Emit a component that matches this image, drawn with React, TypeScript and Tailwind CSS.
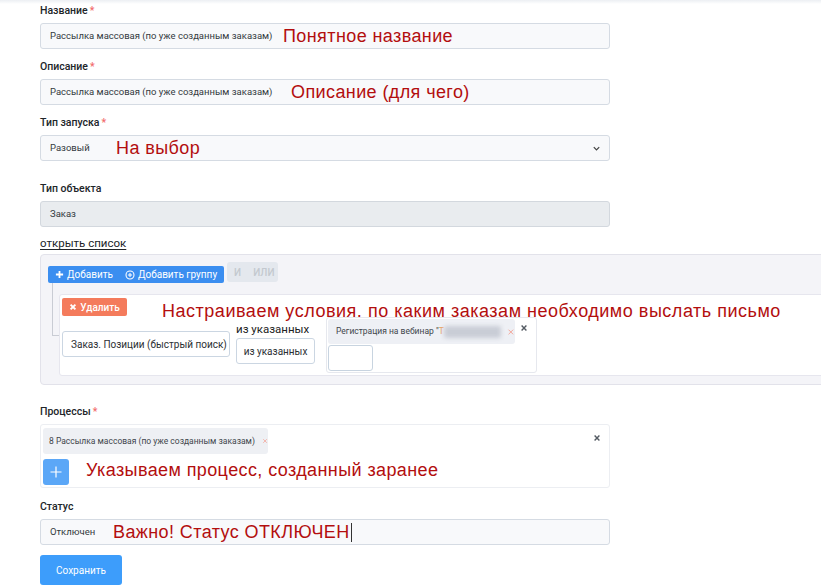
import React from "react";

const ui = { fontFamily: "Roboto, 'Liberation Sans', sans-serif" };
const note = { fontFamily: "'Liberation Sans', Arial, sans-serif" };

function Label({ text, required }: { text: string; required?: boolean }) {
  return (
    <div className="h-[12px] mb-[7px] pt-[1px] text-[10.5px] leading-[12px] font-medium text-[#212529]">
      {text}
      {required && <span className="text-[#f26b6b] ml-[2px]">*</span>}
    </div>
  );
}

function Note({ children }: { children: React.ReactNode }) {
  return (
    <span style={note} className="text-[18px] leading-[20px] tracking-[0.4px] text-[#b30e0e] whitespace-nowrap">
      {children}
    </span>
  );
}

function Field({ value, noteText, gap, disabled, select }: { value: string; noteText?: string; gap: string; disabled?: boolean; select?: boolean }) {
  return (
    <div
      className={`h-[26px] w-[570px] rounded-[3px] border flex items-center pl-[9px] pr-[8px] ${
        disabled ? "bg-[#e9ecef] border-[#d3d8de]" : "bg-[#f8f9fb] border-[#d5dbe3]"
      }`}
    >
      <span className={`text-[9.5px] text-[#333a40] whitespace-nowrap ${gap}`}>{value}</span>
      {noteText && <Note>{noteText}</Note>}
      {select && (
        <svg className="ml-auto" width="9" height="9" viewBox="0 0 10 10">
          <path d="M2 3.5 L5 6.5 L8 3.5" stroke="#444" strokeWidth="1.4" fill="none" />
        </svg>
      )}
    </div>
  );
}

export default function App() {
  return (
    <div style={ui} className="w-[821px] h-[585px] overflow-hidden bg-white">
      <div className="h-[4px] bg-gradient-to-b from-[#eceff3] to-white" />
      <div className="pl-[40px]">
        <Label text="Название" required />
        <Field value="Рассылка массовая (по уже созданным заказам)" gap="w-[233px]" noteText="Понятное название" />

        <div className="mt-[11px]">
          <Label text="Описание" required />
          <Field value="Рассылка массовая (по уже созданным заказам)" gap="w-[241px]" noteText="Описание (для чего)" />
        </div>

        <div className="mt-[11px]">
          <Label text="Тип запуска" required />
          <Field value="Разовый" gap="w-[66px]" noteText="На выбор" select />
        </div>

        <div className="mt-[21px]">
          <Label text="Тип объекта" />
          <Field value="Заказ" gap="" disabled />
        </div>

        <div className="mt-[10px] h-[12px] text-[11.5px] leading-[12px] text-[#212529] underline underline-offset-2">
          открыть список
        </div>

        {/* query builder */}
        <div className="mt-[5px] w-[820px] h-[131px] rounded-[4px] border border-[#e2e2ea] bg-[#f4f4f8] pl-[7px] pt-[7px]">
          <div className="flex items-start">
            <div className="mt-[4px] h-[17px] rounded-[2px] bg-[#3b8ef0] flex items-center px-[7px] gap-[12px] text-[10px] text-white">
              <span className="flex items-center gap-[3px]">
                <svg width="9" height="9" viewBox="0 0 10 10">
                  <path d="M5 1 V9 M1 5 H9" stroke="white" strokeWidth="2" />
                </svg>
                Добавить
              </span>
              <span className="flex items-center gap-[3px]">
                <svg width="10" height="10" viewBox="0 0 12 12">
                  <circle cx="6" cy="6" r="4.8" stroke="white" strokeWidth="1.3" fill="none" />
                  <path d="M6 3.5 V8.5 M3.5 6 H8.5" stroke="white" strokeWidth="1.3" />
                </svg>
                Добавить группу
              </span>
            </div>
            <div className="ml-[3px] h-[20px] w-[51px] rounded-[3px] bg-[#e4e8ee] flex items-center px-[7px] gap-[12px] text-[10px] font-medium text-[#c3c8cf]">
              <span>И</span>
              <span>ИЛИ</span>
            </div>
          </div>

          <div className="relative pl-[11px] pt-[11px]">
            <div className="absolute left-[4px] top-0 w-[7px] h-[53px] border-l border-b border-[#c9ccd4]" />
            <div className="relative h-[82px] rounded-[3px] border border-[#e6e6ee] bg-white pl-[2px] pt-[3px]">
              <div className="flex items-start h-[17px]">
                <div className="h-[18px] w-[65px] rounded-[2px] bg-[#f47b5c] flex items-center justify-center gap-[3px] text-[10px] font-medium text-white">
                  <svg width="8" height="8" viewBox="0 0 10 10">
                    <path d="M2 2 L8 8 M8 2 L2 8" stroke="white" strokeWidth="2.4" />
                  </svg>
                  Удалить
                </div>
                <div className="ml-[35px] mt-[2px]">
                  <Note>
                    <span className="tracking-[0.52px]">Настраиваем условия, по каким заказам необходимо выслать письмо</span>
                  </Note>
                </div>
              </div>
              <div className="flex items-start mt-[2px]">
                <div className="mt-[14px] h-[26px] w-[168px] rounded-[3px] border border-[#cbd6e2] bg-white flex items-center pl-[8px] text-[10px] text-[#2b2f33] whitespace-nowrap">
                  Заказ. Позиции (быстрый поиск)
                </div>
                <div className="ml-[6px] mt-[6px] flex flex-col">
                  <span className="text-[11.5px] leading-[13px] text-[#222] whitespace-nowrap">из указанных</span>
                  <div className="mt-[2px] h-[26px] w-[79px] rounded-[3px] border border-[#cbd6e2] bg-white flex items-center justify-center text-[10px] text-[#2b2f33]">
                    из указанных
                  </div>
                </div>
                <div className="relative ml-[11px] h-[56px] w-[211px] rounded-[3px] border border-[#e6e8ee] bg-white p-[1px]">
                  <div className="h-[25px] w-[187px] rounded-[3px] bg-[#eef0f5] flex items-center pl-[8px] text-[8.5px] text-[#41464c] whitespace-nowrap">
                    Регистрация на вебинар "
                    <span className="text-[#e8a060]">Т</span>
                    <span className="h-[12px] w-[60px] rounded-[2px] bg-[#c9cdd6] blur-[2px]" />
                    <svg className="ml-[6px]" width="8" height="8" viewBox="0 0 10 10">
                      <path d="M2 2 L8 8 M8 2 L2 8" stroke="#f3a79a" strokeWidth="1.3" />
                    </svg>
                  </div>
                  <svg className="absolute right-[8px] top-[6px]" width="8" height="8" viewBox="0 0 10 10">
                    <path d="M2 2 L8 8 M8 2 L2 8" stroke="#555b63" strokeWidth="1.8" />
                  </svg>
                  <div className="mt-[1px] h-[26px] w-[45px] rounded-[3px] border border-[#c8d4e0] bg-white" />
                </div>
              </div>
            </div>
          </div>
        </div>

        <div className="mt-[20px]">
          <Label text="Процессы" required />
          <div className="relative h-[64px] w-[570px] rounded-[3px] border border-[#eceef2] bg-white pl-[2px] pt-[3px]">
            <div className="h-[26px] w-[225px] rounded-[3px] bg-[#eef0f4] flex items-center pl-[6px] text-[8.5px] text-[#41464c] whitespace-nowrap">
              8 Рассылка массовая (по уже созданным заказам)
              <svg className="ml-[7px]" width="8" height="8" viewBox="0 0 10 10">
                <path d="M2 2 L8 8 M8 2 L2 8" stroke="#f3a79a" strokeWidth="1.3" />
              </svg>
            </div>
            <svg className="absolute right-[8px] top-[9px]" width="8" height="8" viewBox="0 0 10 10">
              <path d="M2 2 L8 8 M8 2 L2 8" stroke="#555b63" strokeWidth="1.8" />
            </svg>
            <div className="mt-[5px] flex items-center">
              <div className="h-[26px] w-[26px] rounded-[3px] bg-[#5ba7f7] flex items-center justify-center">
                <svg width="12" height="12" viewBox="0 0 12 12">
                  <path d="M6 0.5 V11.5 M0.5 6 H11.5" stroke="white" strokeWidth="1.2" />
                </svg>
              </div>
              <div className="ml-[17px] -mt-[2px]">
                <Note>Указываем процесс, созданный заранее</Note>
              </div>
            </div>
          </div>
        </div>

        <div className="mt-[12px]">
          <Label text="Статус" />
          <div className="h-[26px] w-[570px] rounded-[3px] border border-[#d5dbe3] bg-[#f8f9fb] flex items-center pl-[9px]">
            <span className="w-[63px] text-[9.5px] text-[#333a40]">Отключен</span>
            <Note>Важно! Статус ОТКЛЮЧЕН</Note>
            <span className="ml-[1px] h-[19px] w-[1px] bg-[#333]" />
          </div>
        </div>

        <div className="mt-[10px] h-[30px] w-[82px] rounded-[3px] bg-[#3d9dfb] flex items-center justify-center text-[10px] text-white">
          Сохранить
        </div>
      </div>
    </div>
  );
}
